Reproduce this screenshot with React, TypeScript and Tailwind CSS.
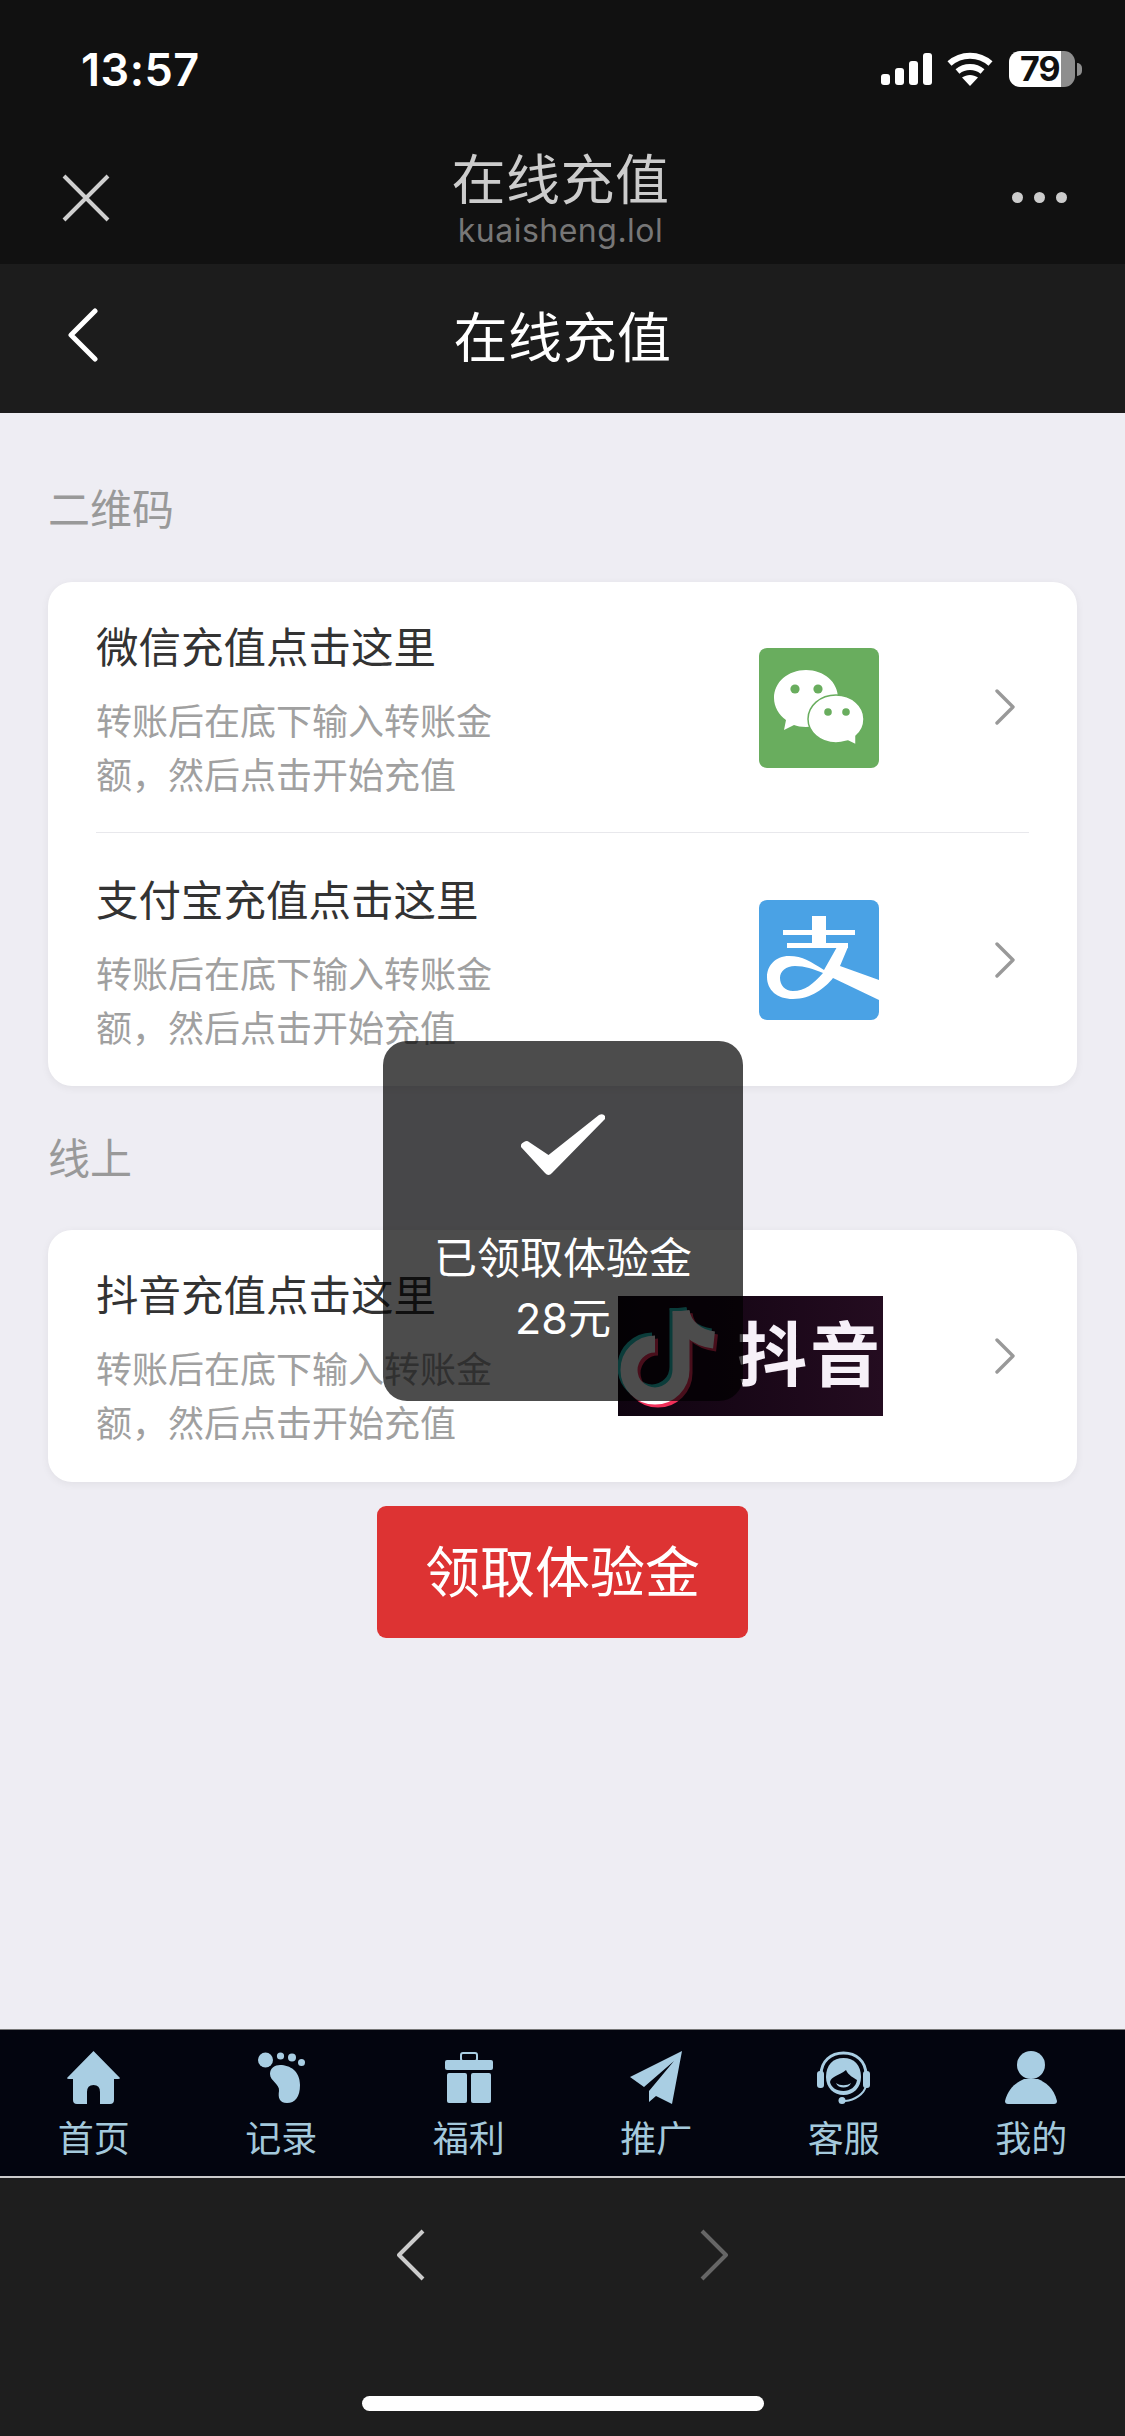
import React from "react";

const tabs = [
  { label: "首页", icon: <HomeIcon /> },
  { label: "记录", icon: <FootIcon /> },
  { label: "福利", icon: <GiftIcon /> },
  { label: "推广", icon: <PlaneIcon /> },
  { label: "客服", icon: <HeadsetIcon /> },
  { label: "我的", icon: <PersonIcon /> },
];

function HomeIcon() {
  return (
    <svg width="53" height="53" viewBox="0 0 53 53" fill="#a9cee3">
      <path d="M26.5 0 L53 27 Q53 28 51 28 H47 V49 Q47 53 43 53 H33 V41 Q33 34 26.5 34 Q20 34 20 41 V53 H10 Q6 53 6 49 V28 H2 Q0 28 0 27 Z" />
    </svg>
  );
}

function FootIcon() {
  return (
    <svg width="47" height="53" viewBox="0 0 47 53" fill="#a9cee3">
      <circle cx="7.5" cy="9" r="7.5" />
      <circle cx="22.5" cy="5" r="3.6" />
      <circle cx="34" cy="6.5" r="4" />
      <circle cx="43.5" cy="11.5" r="3.5" />
      <path d="M22 14 C32 14 42 20 42 34 C42 46 37 52 29 52 C21 52 20 46 21 40 C22 33 12 30 12 23 C12 17 17 14 22 14 Z" />
    </svg>
  );
}

function GiftIcon() {
  return (
    <svg width="48" height="53" viewBox="0 0 48 53" fill="#a9cee3">
      <rect x="16" y="2" width="16" height="8" rx="2" fill="none" stroke="#a9cee3" strokeWidth="2" />
      <rect x="0" y="9" width="48" height="10" rx="2" />
      <rect x="2" y="22" width="20" height="30" rx="2" />
      <rect x="26" y="22" width="20" height="30" rx="2" />
    </svg>
  );
}

function PlaneIcon() {
  return (
    <svg width="52" height="53" viewBox="0 0 52 53" fill="#a9cee3">
      <path d="M52 0 L0 26 L14 36 L44 10 L19 40 L19 51 L26 45 L42 53 Z" strokeLinejoin="round" />
    </svg>
  );
}

function HeadsetIcon() {
  return (
    <svg width="53" height="53" viewBox="0 0 53 53" fill="#a9cee3">
      <path d="M4 24 C4 10 14 2 26.5 2 C39 2 49 10 49 24" fill="none" stroke="#a9cee3" strokeWidth="3" />
      <rect x="0" y="20" width="7" height="17" rx="3" />
      <rect x="46" y="20" width="7" height="17" rx="3" />
      <path d="M9 26 C9 14 16 7 26.5 7 C37 7 44 14 44 26 C44 37 36 44 26.5 44 C17 44 9 37 9 26 Z" />
      <path d="M13 31 C14 25 22 25 29 19 C31 24 37 27 40 29 C39 36 33 40 26.5 40 C19 40 14 36 13 31 Z" fill="#03050f" />
      <path d="M19 32 C23 35 30 35 34 32 C32 38 21 38 19 32 Z" />
      <path d="M49 35 C47 43 38 49 28 50" fill="none" stroke="#a9cee3" strokeWidth="2" />
      <circle cx="25" cy="49.5" r="3.5" />
    </svg>
  );
}

function PersonIcon() {
  return (
    <svg width="52" height="53" viewBox="0 0 52 53" fill="#a9cee3">
      <circle cx="26" cy="14" r="14" />
      <path d="M3 53 Q0 53 0 50 C3 37 12 31 19 28 L33 28 C40 31 49 37 52 50 Q52 53 49 53 Z" />
    </svg>
  );
}

function WechatLogo() {
  return (
    <svg width="120" height="120" viewBox="0 0 120 120" className="rounded-[8px] bg-[#69ad5e]">
      <path d="M47 22 C65 22 79 34 79 50 C79 66 65 79 47 79 C42 79 38 78 35 77 L25 82 L27 72 C20 67 15 59 15 50 C15 34 29 22 47 22 Z" fill="#fff" />
      <circle cx="36" cy="41" r="4.6" fill="#69ad5e" />
      <circle cx="59" cy="41" r="4.6" fill="#69ad5e" />
      <path d="M77 47 C93 47 105 58 105 71 C105 78 102 84 97 88 L97 97 L89 93 C85 94 81 95 77 95 C61 95 49 84 49 71 C49 58 61 47 77 47 Z" fill="#fff" stroke="#69ad5e" strokeWidth="1.5" />
      <circle cx="69" cy="64" r="3.8" fill="#69ad5e" />
      <circle cx="87" cy="64" r="3.8" fill="#69ad5e" />
    </svg>
  );
}

function AlipayLogo() {
  return (
    <svg width="120" height="120" viewBox="0 0 120 120" className="rounded-[8px] bg-[#4aa2e5]">
      <rect x="53" y="16" width="14" height="28" fill="#fff" />
      <rect x="24" y="30" width="72" height="5" fill="#fff" />
      <rect x="28" y="43" width="61" height="5" fill="#fff" />
      <path
        fillRule="evenodd"
        fill="#fff"
        d="M120 80 L81 66 L89 47 H78 L65 70 C52 62 44 56 30 56 C16 56 8 66 8 77 C8 90 18 99 34 99 C52 99 66 88 74 78 L120 100 Z M64 73 C54 84 46 91 34 91 C26 91 21 85 21 78 C21 71 27 66 36 66 C46 66 54 69 64 73 Z"
      />
    </svg>
  );
}

function DouyinLogo() {
  const stem = "M63 15 V74 A26 26 0 1 1 37 48";
  const hook = "M63 15 C65 30 78 42 96 44";
  return (
    <div className="flex h-[120px] w-[265px] items-center bg-gradient-to-r from-[#0f0410] to-[#240c20]">
      <svg width="119" height="120" viewBox="0 0 119 120" className="shrink-0">
        <g transform="translate(-3 -3)" fill="none" stroke="#25c8c4" strokeWidth="17">
          <path d={stem} />
          <path d={hook} />
        </g>
        <g transform="translate(3 3)" fill="none" stroke="#f0305a" strokeWidth="17">
          <path d={stem} />
          <path d={hook} />
        </g>
        <g fill="none" stroke="#ffffff" strokeWidth="17">
          <path d={stem} />
          <path d={hook} />
        </g>
      </svg>
      <span className="text-[70px] leading-none font-bold tracking-[3px] whitespace-nowrap text-[#f6f0f8]">抖音</span>
    </div>
  );
}

function Chevron({ tone = "#999999" }: { tone?: string }) {
  return (
    <svg width="20" height="36" viewBox="0 0 20 36" fill="none" stroke={tone} strokeWidth="3.4" strokeLinecap="round" strokeLinejoin="round" className="shrink-0">
      <path d="M2 2 L18 18 L2 34" />
    </svg>
  );
}

function PayRow({ title, logo, gap, pt, height }: { title: string; logo: React.ReactNode; gap: string; pt: string; height: string }) {
  return (
    <div className={`flex items-center pr-[62px] pl-[48px] ${height}`}>
      <div className={`w-[410px] shrink-0 self-start ${pt}`}>
        <div className="text-[42.5px] leading-[54px] text-[#333333]">{title}</div>
        <div className="mt-[20px] text-[36px] leading-[54px] text-[#a0a0a0]">转账后在底下输入转账金额，然后点击开始充值</div>
      </div>
      <div className="ml-auto flex items-center">
        <div className="shrink-0">{logo}</div>
        <div className={gap}>
          <Chevron />
        </div>
      </div>
    </div>
  );
}

export default function App() {
  return (
    <div className="relative flex h-[2436px] w-[1125px] flex-col overflow-hidden bg-[#1e1e1e] font-['Inter','Noto_Sans_CJK_SC',sans-serif]">
      {/* system chrome */}
      <div className="h-[264px] shrink-0 bg-[#111111]">
        <div className="flex h-[138px] items-center pr-[43px] pl-[81px]">
          <span className="text-[45px] leading-none font-semibold tracking-[0.5px] text-white">13:57</span>
          <div className="ml-auto flex items-center">
            <svg width="51" height="32" viewBox="0 0 51 32" fill="#fff">
              <rect x="0" y="21" width="9" height="11" rx="3" />
              <rect x="14" y="15" width="9" height="17" rx="3" />
              <rect x="28" y="8" width="9" height="24" rx="3" />
              <rect x="42" y="0" width="9" height="32" rx="3" />
            </svg>
            <svg width="46" height="34" viewBox="0 0 46 34" className="ml-[15px]" fill="none" stroke="#fff" strokeWidth="6">
              <path d="M2.5 11.5 C14 1 32 1 43.5 11.5" />
              <path d="M10.5 19.5 C17.5 13.5 28.5 13.5 35.5 19.5" />
              <path d="M23 34 L15 25.5 C20 22 26 22 31 25.5 Z" fill="#fff" stroke="none" />
            </svg>
            <div className="ml-[16px] flex h-[36px] w-[66px] items-center rounded-[11px] bg-[linear-gradient(to_right,#ffffff_52px,#8e8e8e_52px)] pl-[11px] text-[34px] leading-none font-bold tracking-[-1px] text-[#111111]">79</div>
            <div className="ml-[2px] h-[13px] w-[5px] rounded-r-full bg-[#8e8e8e]" />
          </div>
        </div>
        <div className="grid h-[126px] grid-cols-[1fr_auto_1fr]">
          <svg width="48" height="48" viewBox="0 0 48 48" fill="none" stroke="#cfcfcf" strokeWidth="4" className="mt-[36px] ml-[62px]">
            <path d="M2 2 L46 46 M46 2 L2 46" />
          </svg>
          <div className="flex flex-col items-center pt-[15px] pr-[4px]">
            <div className="text-[54px] leading-[56px] tracking-[0.5px] text-[#cccccc]">在线充值</div>
            <div className="mt-[4px] text-[32px] leading-[36px] tracking-[0.5px] text-[#777777]">kuaisheng.lol</div>
          </div>
          <div className="mt-[54px] mr-[58px] flex justify-end gap-[11px]">
            <div className="h-[11px] w-[11px] rounded-full bg-[#cccccc]" />
            <div className="h-[11px] w-[11px] rounded-full bg-[#cccccc]" />
            <div className="h-[11px] w-[11px] rounded-full bg-[#cccccc]" />
          </div>
        </div>
      </div>

      {/* page header */}
      <div className="relative flex h-[149px] shrink-0 items-center justify-center bg-[#1c1c1c]">
        <svg width="32" height="54" viewBox="0 0 32 54" fill="none" stroke="#fff" strokeWidth="5" strokeLinecap="round" strokeLinejoin="round" className="absolute top-[44px] left-[67px]">
          <path d="M28 3 L4 27 L28 51" />
        </svg>
        <span className="text-[54px] leading-none tracking-[0.5px] text-white">在线充值</span>
      </div>

      {/* content */}
      <div className="flex h-[1616px] shrink-0 flex-col bg-[#eeedf3] px-[48px]">
        <div className="pt-[68px] pb-[43px] text-[42px] leading-[58px] text-[#999999]">二维码</div>
        <div className="rounded-[24px] bg-white shadow-[0_2px_8px_rgba(0,0,0,0.06)]">
          <PayRow title="微信充值点击这里" logo={<div className="mt-[1px]"><WechatLogo /></div>} gap="ml-[116px]" pt="pt-[39px]" height="h-[250px]" />
          <div className="mx-[48px] h-px bg-[#e8e8ec]" />
          <PayRow title="支付宝充值点击这里" logo={<AlipayLogo />} gap="ml-[116px]" pt="pt-[41px]" height="h-[253px]" />
        </div>
        <div className="pt-[44px] pb-[42px] text-[42px] leading-[58px] text-[#999999]">线上</div>
        <div className="rounded-[24px] bg-white shadow-[0_2px_8px_rgba(0,0,0,0.06)]">
          <PayRow title="抖音充值点击这里" logo={<DouyinLogo />} gap="ml-[112px]" pt="pt-[39px]" height="h-[252px]" />
        </div>
        <button className="mx-auto mt-[24px] h-[132px] w-[371px] rounded-[9px] bg-[#dd3333] text-[55px] text-white">领取体验金</button>
      </div>

      {/* tab bar */}
      <div className="grid h-[149px] shrink-0 grid-cols-6 border-t border-b-[2px] border-t-[#777777] border-b-[#cccccc] bg-[#03050f]">
        {tabs.map((tab) => (
          <div key={tab.label} className="flex flex-col items-center pt-[21px]">
            {tab.icon}
            <span className="mt-[15px] text-[36px] leading-[40px] text-[#a4c9dc]">{tab.label}</span>
          </div>
        ))}
      </div>

      {/* browser nav */}
      <div className="flex flex-1 flex-col items-center">
        <div className="flex items-center gap-[275px] pt-[51px]">
          <svg width="28" height="52" viewBox="0 0 28 52" fill="none" stroke="#cccccc" strokeWidth="4" strokeLinejoin="round">
            <path d="M26 2 L2 26 L26 50" />
          </svg>
          <svg width="28" height="52" viewBox="0 0 28 52" fill="none" stroke="#666666" strokeWidth="4" strokeLinejoin="round">
            <path d="M2 2 L26 26 L2 50" />
          </svg>
        </div>
        <div className="mt-[115px] h-[15px] w-[402px] rounded-full bg-white" />
      </div>

      {/* toast */}
      <div className="absolute top-[1041px] left-[383px] flex h-[360px] w-[360px] flex-col items-center rounded-[24px] bg-black/70 text-white">
        <svg width="84" height="62" viewBox="0 0 84 62" fill="#fff" className="mt-[73px]">
          <path d="M0 33 Q-1 30 3 28 Q6 26 8 28 L27.5 41 L78 1 Q82 -1 84 2 Q85 4 83 6 L31 59 Q27.5 63 24 59 Z" />
        </svg>
        <div className="mt-[52px] text-center text-[43px] leading-[60px]">
          已领取体验金
          <br />
          28元
        </div>
      </div>
    </div>
  );
}
